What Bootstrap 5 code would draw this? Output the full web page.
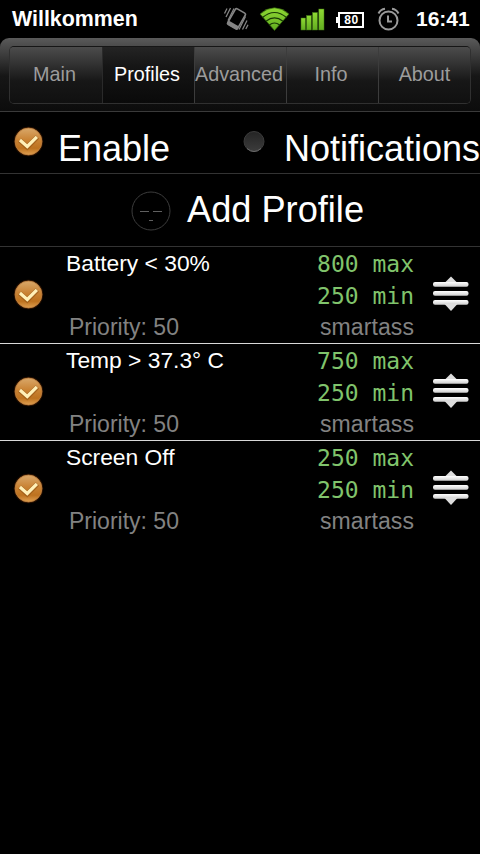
<!DOCTYPE html>
<html lang="en" data-bs-theme="dark">
<head>
<meta charset="utf-8">
<meta name="viewport" content="width=device-width, initial-scale=1">
<title>Profiles</title>
<link href="https://cdn.jsdelivr.net/npm/bootstrap@5.3.0/dist/css/bootstrap.min.css" rel="stylesheet">
<style>
body{background:#000;color:#fff;font-family:"Liberation Sans",Arial,sans-serif;min-height:854px;overflow-x:hidden}
svg{display:block;flex:none}
.status{height:38px;line-height:38px;font-size:21.4px;font-weight:700;padding:0 10px 0 12px}
.status .clock{font-size:21px;width:54px;margin-left:2px}
.status .icons{margin-left:auto}
.head-shell{height:74px;padding:8px 9px;border-bottom:1px solid #3a3a3a;border-radius:9px 9px 0 0;background:linear-gradient(#5a5a5a 0,#4a4a4a 9px,#161616 38px,#0c0c0c 100%)}
.tabs{height:58px;border:1px solid #303030;border-top-color:#161616;border-radius:5px;overflow:hidden;flex-wrap:nowrap}
.tabs .nav-link{width:92px;padding:0 3px 0 0;height:56px;line-height:54px;font-size:19.8px;color:#9c9c9c;text-align:center;white-space:nowrap;border-radius:0;border-left:1px solid #3c3c3c;background:linear-gradient(#4c4c4c,#3a3a3a 12px,#171717 34px,#101010)}
.tabs .nav-item:first-child .nav-link{border-left:0}
.tabs .nav-item:last-child .nav-link{padding-right:0}
.tabs .nav-link.active{color:#fff;background:linear-gradient(#242424,#151515 20px,#0a0a0a);border-left-color:#2a2a2a}
.toggles{height:62px;border-bottom:1px solid #333;font-size:36px;line-height:49px;white-space:nowrap}
.toggles .lbl{padding-top:12px}
.toggles .on{width:58px;padding:14px 0 0 13px}
.toggles .off{margin-left:71px;width:43px;padding:17px 0 0 1px}
.adder{height:73px;border-bottom:1px solid #333;font-size:36.200px;line-height:71px;padding-left:131px;gap:16px}
.profile{height:97px;border-bottom:1px solid #d8d8d8;font-size:22.8px;line-height:32px;white-space:nowrap}
.profile:last-child{border-bottom-color:transparent}
.profile .tick{width:66px;padding:0 0 2px 13px}
.profile .info{width:190px}
.profile .grey{color:#828282;font-size:23px}
.profile .info .grey{padding-left:3px}
.profile .freq{width:158px;text-align:right}
.profile .freq .grey{letter-spacing:.1px}
.profile .mono{font-family:"DejaVu Sans Mono",monospace;font-size:23px;color:#80c46c;position:relative;top:1px}
.profile .grip{padding-left:18px;padding-bottom:3px}
</style>
<script src="https://cdn.jsdelivr.net/npm/bootstrap@5.3.0/dist/js/bootstrap.bundle.min.js"></script>
</head>
<body>
<svg width="0" height="0" class="position-absolute" aria-hidden="true">
<defs>
<linearGradient id="gold" x1="0" y1="0" x2="0" y2="1"><stop offset="0" stop-color="#d9a86a"/><stop offset=".45" stop-color="#c98233"/><stop offset=".75" stop-color="#bd721f"/><stop offset="1" stop-color="#e0a050"/></linearGradient>
<linearGradient id="dark" x1="0" y1="0" x2="0" y2="1"><stop offset="0" stop-color="#242424"/><stop offset="1" stop-color="#3c3c3c"/></linearGradient>
<linearGradient id="leaf" x1="0" y1="0" x2="0" y2="1"><stop offset="0" stop-color="#8fd934"/><stop offset="1" stop-color="#62ad20"/></linearGradient>
<linearGradient id="bar" x1="0" y1="0" x2="0" y2="1"><stop offset="0" stop-color="#fff"/><stop offset="1" stop-color="#cfcfcf"/></linearGradient>
<symbol id="check" viewBox="0 0 30 30"><circle cx="15" cy="15" r="14.200" fill="#8a3a00" opacity=".3"/><circle cx="15" cy="15" r="13" fill="url(#gold)" stroke="#bd8040" stroke-width=".8"/><path d="M6.500 13.800l7.300 6.600 9.800-9.700" fill="none" stroke="#8a4f12" stroke-width="4.800" opacity=".55"/><path d="M6.700 13.600l7.100 6.200 9.300-9.300" fill="none" stroke="#fff0b8" stroke-width="3.100"/></symbol>
<symbol id="drag" viewBox="0 0 38 36"><path d="M12.500 7L19 .5 25.500 7z" fill="#ddd"/><g fill="url(#bar)"><rect x="1" y="6" width="35.500" height="4.700" rx="2"/><rect x="1" y="15" width="35.500" height="4.700" rx="2"/><rect x="1" y="24" width="35.500" height="4.700" rx="2"/></g><path d="M12.500 28h13L19 35z" fill="#ddd"/></symbol>
</defs>
</svg>

<header class="status d-flex align-items-start">
<span>Willkommen</span>
<div class="icons d-flex">
<svg width="192" height="38" viewBox="222 0 192 38">
<g fill="none" stroke="#858585"><g transform="rotate(30 236.500 19)"><rect x="230.700" y="9.800" width="11.500" height="18" rx="1.500" stroke-width="1.700"/><path d="M230.500 26.300h12" stroke-width="4"/></g><path d="M224.500 13.500l2.500-5M226 17l4.500-9M228 20.500l6-12M239 29.500l6.500-13M242.500 29.500l4.500-9M245.800 29l2.200-4.300" stroke-width="1.300"/></g>
<path d="M260 14Q274.500 1.500 289 14L274.500 30.500Z" fill="url(#leaf)" stroke="#2d5b08" stroke-width=".7"/>
<g fill="none" stroke="#183a05" stroke-width="1.200"><path d="M262.500 17.500Q274.500 7.500 286.500 17.500M266 21.200Q274.500 14.500 283 21.200M269.300 25Q274.500 21 279.700 25"/></g>
<g fill="url(#leaf)" stroke="#3d7212" stroke-width=".5"><rect x="301" y="18" width="4.500" height="12"/><rect x="306.500" y="15.500" width="4.800" height="14.500"/><rect x="312.500" y="12.500" width="5" height="17.500"/><rect x="318.800" y="9" width="5.200" height="21"/></g>
<rect x="339" y="13" width="24" height="14" fill="none" stroke="#fff" stroke-width="2"/><rect x="336" y="17" width="3" height="6" fill="#fff"/>
<text x="351.200" y="24.300" text-anchor="middle" font-size="12" font-weight="700" fill="#fff" font-family="Liberation Sans" textLength="14">80</text>
<g fill="none" stroke="#9a9a9a" stroke-width="2"><circle cx="388.500" cy="20.500" r="9"/><path d="M388 15.500v6h4"/><path d="M378.500 13.500q2-4 6.500-4.700M398.500 13.500q-2-4-6.500-4.700"/></g>
</svg>
</div>
<span class="clock">16:41</span>
</header>

<nav class="head-shell">
<ul class="nav tabs">
<li class="nav-item"><a class="nav-link" href="#">Main</a></li>
<li class="nav-item"><a class="nav-link active" href="#">Profiles</a></li>
<li class="nav-item"><a class="nav-link" href="#">Advanced</a></li>
<li class="nav-item"><a class="nav-link" href="#">Info</a></li>
<li class="nav-item"><a class="nav-link" href="#">About</a></li>
</ul>
</nav>

<main>
<div class="toggles d-flex">
<div class="on"><svg width="31" height="31"><use href="#check"/></svg></div>
<div class="lbl">Enable</div>
<div class="off"><svg width="24" height="24" viewBox="0 0 24 24"><circle cx="12" cy="12.500" r="10" fill="url(#dark)" stroke="#3c3c3c"/><path d="M5 19.500q7 6 14 0" fill="none" stroke="#6a6a6a"/></svg></div>
<div class="lbl">Notifications</div>
</div>
<div class="adder d-flex align-items-start">
<svg class="mt-3" width="40" height="42" viewBox="0 0 40 42"><g fill="none"><circle cx="20" cy="21" r="19" stroke="#3c3c3c"/><path d="M9 21.500h9M22 21.500h9M18 30.500h4" stroke="#606060" stroke-width="1"/></g></svg>
<span>Add Profile</span>
</div>
<section>
<article class="profile d-flex align-items-center">
<div class="tick"><svg width="31" height="31"><use href="#check"/></svg></div>
<div class="info align-self-start"><div>Battery &lt; 30%</div><div>&nbsp;</div><div class="grey">Priority: 50</div></div>
<div class="freq align-self-start"><div class="mono">800 max</div><div class="mono">250 min</div><div class="grey">smartass</div></div>
<div class="grip"><svg width="38" height="36"><use href="#drag"/></svg></div>
</article>
<article class="profile d-flex align-items-center">
<div class="tick"><svg width="31" height="31"><use href="#check"/></svg></div>
<div class="info align-self-start"><div>Temp &gt; 37.3° C</div><div>&nbsp;</div><div class="grey">Priority: 50</div></div>
<div class="freq align-self-start"><div class="mono">750 max</div><div class="mono">250 min</div><div class="grey">smartass</div></div>
<div class="grip"><svg width="38" height="36"><use href="#drag"/></svg></div>
</article>
<article class="profile d-flex align-items-center">
<div class="tick"><svg width="31" height="31"><use href="#check"/></svg></div>
<div class="info align-self-start"><div>Screen Off</div><div>&nbsp;</div><div class="grey">Priority: 50</div></div>
<div class="freq align-self-start"><div class="mono">250 max</div><div class="mono">250 min</div><div class="grey">smartass</div></div>
<div class="grip"><svg width="38" height="36"><use href="#drag"/></svg></div>
</article>
</section>
</main>
</body>
</html>
